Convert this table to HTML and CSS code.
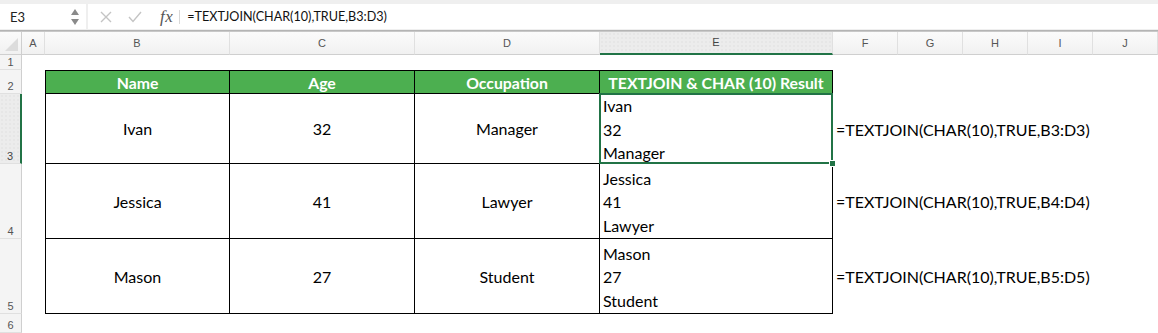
FILE: index.html
```html
<!DOCTYPE html>
<html>
<head>
<meta charset="utf-8">
<link rel="stylesheet" href="styles.css">
</head>
<body>
<div class="app">
  <div class="fbar">
    <div class="namebox">
      <span class="nb-text">E3</span>
      <svg class="stepper" width="10" height="18" viewBox="0 0 10 18"><path d="M5 1 L9 7 L1 7 Z" fill="#8a8a8a"/><path d="M1 11 L9 11 L5 17 Z" fill="#8a8a8a"/></svg>
    </div>
    <div class="formula">
      <svg class="ico-x" width="12" height="12" viewBox="0 0 12 12"><path d="M1 1 L11 11 M11 1 L1 11" stroke="#c4c4c4" stroke-width="1.4" fill="none"/></svg>
      <svg class="ico-check" width="14" height="12" viewBox="0 0 14 12"><path d="M1 6 L5 10.5 L13 1" stroke="#c4c4c4" stroke-width="1.4" fill="none"/></svg>
      <span class="fx">fx</span>
      <span class="fsep"></span>
      <span class="ftext">=TEXTJOIN(CHAR(10),TRUE,B3:D3)</span>
    </div>
  </div>
  <div class="dline"></div>
  <div class="sheet">
    <div class="ch corner"></div>
    <div class="ch">A</div>
    <div class="ch">B</div>
    <div class="ch">C</div>
    <div class="ch">D</div>
    <div class="ch sel">E</div>
    <div class="ch">F</div>
    <div class="ch">G</div>
    <div class="ch">H</div>
    <div class="ch">I</div>
    <div class="ch">J</div>

    <div class="rh">1</div>
    <div class="row-rest"></div>

    <div class="rh">2</div>
    <div class="c"></div>
    <div class="c th first">Name</div>
    <div class="c th">Age</div>
    <div class="c th">Occupation</div>
    <div class="c th">TEXTJOIN &amp; CHAR (10) Result</div>
    <div class="c span5"></div>

    <div class="rh rsel">3</div>
    <div class="c"></div>
    <div class="c td first">Ivan</div>
    <div class="c td">32</div>
    <div class="c td">Manager</div>
    <div class="c td multi active"><span>Ivan</span><span>32</span><span>Manager</span></div>
    <div class="c span5 fml">=TEXTJOIN(CHAR(10),TRUE,B3:D3)</div>

    <div class="rh">4</div>
    <div class="c"></div>
    <div class="c td first">Jessica</div>
    <div class="c td">41</div>
    <div class="c td">Lawyer</div>
    <div class="c td multi"><span>Jessica</span><span>41</span><span>Lawyer</span></div>
    <div class="c span5 fml">=TEXTJOIN(CHAR(10),TRUE,B4:D4)</div>

    <div class="rh">5</div>
    <div class="c"></div>
    <div class="c td first">Mason</div>
    <div class="c td">27</div>
    <div class="c td">Student</div>
    <div class="c td multi"><span>Mason</span><span>27</span><span>Student</span></div>
    <div class="c span5 fml">=TEXTJOIN(CHAR(10),TRUE,B5:D5)</div>

    <div class="rh">6</div>
    <div class="row-rest"></div>
  </div>
</div>
</body>
</html>
```

FILE: styles.css
```css
html, body {
  margin: 0;
  padding: 0;
  background: #ffffff;
}

.app {
  width: 1158px;
  height: 333px;
  overflow: hidden;
  font-family: "Lato", "Liberation Sans", sans-serif;
}

.fbar {
  display: flex;
  height: 30px;
  box-sizing: border-box;
  padding-top: 4px;
  padding-bottom: 1px;
  background: #efefef;
  gap: 2px;
}

.namebox {
  width: 86px;
  background: #ffffff;
  display: flex;
  align-items: center;
  justify-content: space-between;
  padding: 0 6px 0 10px;
  box-sizing: border-box;
}

.nb-text {
  font-family: "Lato", "Liberation Sans", sans-serif;
  font-size: 13px;
  color: #222;
}

.formula {
  flex: 1;
  background: #ffffff;
  display: flex;
  align-items: center;
}

.ico-x {
  margin-left: 12px;
}

.ico-check {
  margin-left: 16px;
}

.fx {
  margin-left: 18px;
  font-family: "Liberation Serif", "DejaVu Serif", serif;
  font-style: italic;
  font-size: 17px;
  color: #555;
  letter-spacing: 0.5px;
}

.fsep {
  width: 1px;
  height: 14px;
  background: #d8d8d8;
  margin-left: 6px;
}

.ftext {
  margin-left: 7px;
  font-family: "Lato", "Liberation Sans", sans-serif;
  font-size: 12.6px;
  color: #111;
}

.dline {
  height: 2px;
  border-top: 1px solid #b4b4b4;
  border-bottom: 1px solid #c8c8c8;
  box-sizing: border-box;
}

.sheet {
  display: grid;
  grid-template-columns: 22px 23px 185px 185px 185px 233px 65px 65px 65px 65px 65px;
  grid-template-rows: 23px 15px 24px 70px 75px 75px 19px;
}

.ch {
  background: linear-gradient(#fbfbfb, #f1f1f1);
  border-right: 1px solid #e0e0e0;
  border-bottom: 1px solid #cfcfcf;
  box-sizing: border-box;
  font-family: "Liberation Sans", Arial, sans-serif;
  font-size: 11px;
  color: #555;
  display: flex;
  align-items: center;
  justify-content: center;
  padding-bottom: 1px;
}

.ch.corner {
  position: relative;
  border-right: 1px solid #cfcfcf;
}

.ch.corner::after {
  content: "";
  position: absolute;
  right: 3px;
  bottom: 3px;
  width: 0;
  height: 0;
  border-left: 13px solid transparent;
  border-bottom: 13px solid #dcdcdc;
}

.ch.sel {
  background-color: #ececec;
  background-image: radial-gradient(#dedede 0.6px, transparent 0.8px);
  background-size: 4px 4px;
  border-bottom: 2px solid #217346;
  color: #444;
}

.rh {
  background: #f4f4f4;
  border-right: 1px solid #cfcfcf;
  border-bottom: 1px solid #e0e0e0;
  box-sizing: border-box;
  font-family: "Liberation Sans", Arial, sans-serif;
  font-size: 11px;
  color: #555;
  display: flex;
  align-items: flex-end;
  justify-content: center;
  padding-bottom: 1px;
}

.rh.rsel {
  background-color: #ececec;
  background-image: radial-gradient(#dedede 0.6px, transparent 0.8px);
  background-size: 4px 4px;
  border-right: 2px solid #217346;
  color: #444;
}

.row-rest {
  grid-column: 2 / -1;
}

.c {
  box-sizing: border-box;
  font-size: 16px;
  color: #000;
}

.span5 {
  grid-column: span 5;
}

.th {
  background: #4caf50;
  color: #ffffff;
  font-weight: bold;
  font-size: 15.8px;
  border-top: 1px solid #000;
  border-right: 1px solid #000;
  border-bottom: 1px solid #000;
  display: flex;
  align-items: center;
  justify-content: center;
  white-space: nowrap;
}

.td {
  border-right: 1px solid #000;
  border-bottom: 1px solid #000;
  display: flex;
  align-items: center;
  justify-content: center;
}

.first {
  border-left: 1px solid #000;
}

.multi {
  flex-direction: column;
  align-items: flex-start;
  justify-content: center;
  padding-left: 3px;
  padding-top: 2px;
  line-height: 23.5px;
}

.active {
  position: relative;
}

.active::before {
  content: "";
  position: absolute;
  left: -1px;
  top: -1px;
  right: -1px;
  bottom: -1px;
  border: 2px solid #217346;
}

.active::after {
  content: "";
  position: absolute;
  right: -4px;
  bottom: -4px;
  width: 5px;
  height: 5px;
  background: #217346;
  border: 1px solid #fff;
}

.fml {
  display: flex;
  align-items: center;
  padding-left: 3px;
  white-space: nowrap;
}
```
